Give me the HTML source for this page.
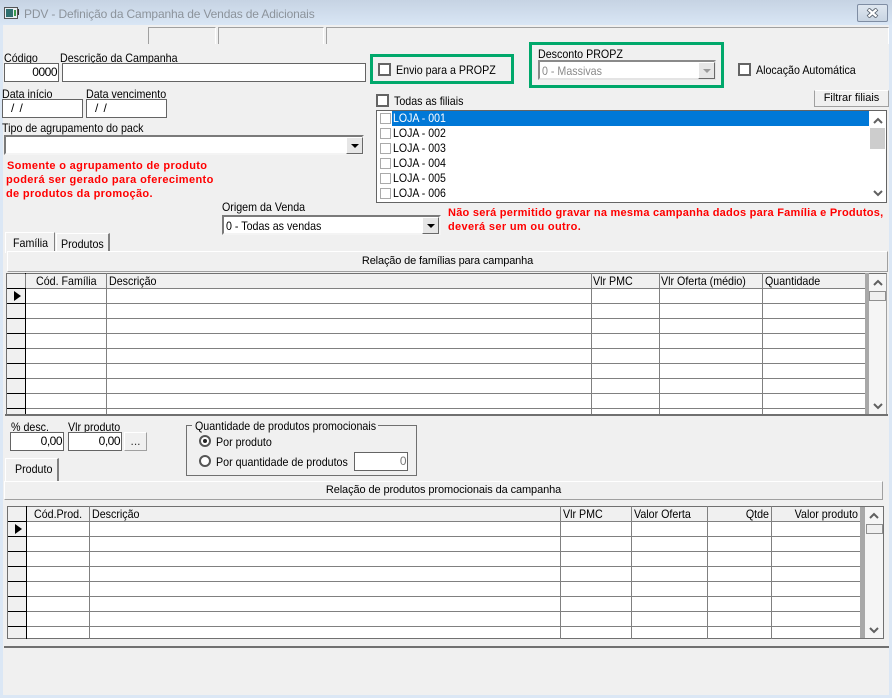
<!DOCTYPE html>
<html><head><meta charset="utf-8"><style>
html,body{margin:0;padding:0}
body{width:892px;height:698px;position:relative;overflow:hidden;background:#f0f0f0;font:12px/14px "Liberation Sans",sans-serif;color:#000}
div,span.a{position:absolute;box-sizing:border-box}
.t{white-space:nowrap;height:14px;transform:scaleX(.89);transform-origin:0 0}
.r{color:#ff0000;font-weight:bold;font-size:11px;letter-spacing:.34px;white-space:nowrap}
.in{background:#fff;border:1px solid #646464;text-align:right;white-space:nowrap;padding-right:1px;letter-spacing:-.5px}
.cb{width:13px;height:13px;background:#fff;border:2px solid #646464}
.ck{width:11px;height:11px;background:#fff;border:1px solid #aaa;left:380px}
.l{left:393px;white-space:nowrap;height:14px;transform:scaleX(.88);transform-origin:0 0}
.h{background:#808080}
.k{background:#000}
.btn{background:#f0f0f0;border:1px solid;border-color:#fff #a0a0a0 #a0a0a0 #fff;text-align:center}
.dd{background:#e6e6e6;border:1px solid;border-color:#fff #696969 #696969 #fff}
.dd i{position:absolute;left:4px;top:6px;width:0;height:0;border:4px solid transparent;border-top:4px solid #000;border-bottom:0}
.v{width:1px;background:#808080}
.rad{width:12px;height:12px;border:2px solid #555;border-radius:50%;background:#fff}
</style></head><body>
<div style="left:0;top:0;width:892px;height:25px;background:linear-gradient(#c6d3e3,#d9e6f5)"></div>
<div style="left:0;top:25px;width:3px;height:673px;background:#dbe7f5"></div>
<div style="right:0;top:25px;width:3px;height:673px;background:#dbe7f5"></div>
<div style="left:0;bottom:0;width:892px;height:3px;background:#dbe7f5"></div>
<div style="left:3px;top:25px;width:886px;height:670px;background:#f0f0f0"></div>
<svg style="position:absolute;left:4px;top:7px" width="16" height="13"><rect x=".5" y=".5" width="13" height="11" fill="#e8eef2" stroke="#555"/><rect x="2" y="2" width="7" height="8" fill="#2f6f6f"/><rect x="10" y="3" width="2" height="6" fill="#3a9a4a"/><rect x="14" y="2" width="1" height="6" fill="#333"/></svg>
<div class="t" style="left:24px;top:7px;color:#8c939b;font-size:12px;letter-spacing:-.15px;transform:none">PDV - Definição da Campanha de Vendas de Adicionais</div>
<div style="left:857px;top:4px;width:31px;height:18px;border:1px solid #7f8da3;border-radius:2px;background:linear-gradient(#dfe7f0,#c8d4e2)"></div>
<svg style="position:absolute;left:866px;top:8px" width="13" height="10"><path d="M2 1 L11 9 M11 1 L2 9" stroke="#5a6470" stroke-width="4"/><path d="M2.5 1.5 L10.5 8.5 M10.5 1.5 L2.5 8.5" stroke="#fff" stroke-width="2.2"/></svg>

<div style="left:148px;top:27px;width:68px;height:17px;border-top:1px solid #a0a0a0;border-left:1px solid #a0a0a0;border-right:1px solid #fff"></div>
<div style="left:218px;top:27px;width:106px;height:17px;border-top:1px solid #a0a0a0;border-left:1px solid #a0a0a0;border-right:1px solid #fff"></div>
<div style="left:326px;top:27px;width:563px;height:17px;border-top:1px solid #a0a0a0;border-left:1px solid #a0a0a0;border-right:1px solid #fff"></div>

<div class="t" style="left:4px;top:51px">Código</div>
<div class="in" style="left:4px;top:63px;width:55px;height:19px;line-height:17px">0000</div>
<div class="t" style="left:60px;top:51px">Descrição da Campanha</div>
<div class="in" style="left:62px;top:63px;width:304px;height:19px"></div>
<div class="t" style="left:2px;top:87px">Data início</div>
<div class="in" style="left:2px;top:99px;width:81px;height:19px;text-align:left;padding-left:8px;line-height:17px">/ &nbsp;/</div>
<div class="t" style="left:86px;top:87px">Data vencimento</div>
<div class="in" style="left:86px;top:99px;width:81px;height:19px;text-align:left;padding-left:8px;line-height:17px">/ &nbsp;/</div>
<div class="t" style="left:2px;top:121px">Tipo de agrupamento do pack</div>
<div style="left:4px;top:135px;width:360px;height:20px;background:#fff;border:2px solid #7a7a7a;border-right-color:#f4f4f4;border-bottom-color:#f4f4f4"></div>
<div class="dd" style="left:346px;top:137px;width:17px;height:17px"><i></i></div>

<div class="r" style="left:7px;top:159px">Somente o agrupamento de produto</div>
<div class="r" style="left:6px;top:173px;letter-spacing:.38px">poderá ser gerado para oferecimento</div>
<div class="r" style="left:6px;top:187px">de produtos da promoção.</div>

<div style="left:370px;top:54px;width:144px;height:30px;border:3px solid #00a86b"></div>
<div class="cb" style="left:378px;top:63px"></div>
<div class="t" style="left:396px;top:63px">Envio para a PROPZ</div>
<div style="left:529px;top:42px;width:195px;height:46px;border:3px solid #00a86b"></div>
<div class="t" style="left:538px;top:47px">Desconto PROPZ</div>
<div style="left:538px;top:60px;width:178px;height:20px;background:#fff;border:2px solid #8a8a8a;border-right-color:#e4e4e4;border-bottom-color:#e4e4e4"></div>
<div class="t" style="left:542px;top:64px;color:#8a8a8a">0 - Massivas</div>
<div class="dd" style="left:698px;top:62px;width:17px;height:17px"><i style="border-top-color:#9a9a9a"></i></div>
<div class="cb" style="left:738px;top:63px"></div>
<div class="t" style="left:756px;top:63px">Alocação Automática</div>

<div class="cb" style="left:376px;top:94px"></div>
<div class="t" style="left:394px;top:94px">Todas as filiais</div>
<div class="btn" style="left:814px;top:90px;width:75px;height:17px;line-height:15px;font-size:11px;border-color:#fff #a0a0a0 #a0a0a0 #a0a0a0">Filtrar filiais</div>

<div style="left:376px;top:110px;width:511px;height:93px;background:#fff;border:1px solid #646464"></div>
<div style="left:392px;top:111px;width:477px;height:15px;background:#0078d7"></div>
<div class="ck" style="top:113px"></div><div class="l" style="top:111px;color:#fff">LOJA - 001</div>
<div class="ck" style="top:128px"></div><div class="l" style="top:126px">LOJA - 002</div>
<div class="ck" style="top:143px"></div><div class="l" style="top:141px">LOJA - 003</div>
<div class="ck" style="top:158px"></div><div class="l" style="top:156px">LOJA - 004</div>
<div class="ck" style="top:173px"></div><div class="l" style="top:171px">LOJA - 005</div>
<div class="ck" style="top:188px"></div><div class="l" style="top:186px">LOJA - 006</div>
<div style="left:870px;top:128px;width:15px;height:21px;background:#cdcdcd"></div>
<svg style="position:absolute;left:873px;top:117px" width="10" height="8"><path d="M1 6 L5 2 L9 6" fill="none" stroke="#606060" stroke-width="2"/></svg>
<svg style="position:absolute;left:873px;top:189px" width="10" height="8"><path d="M1 2 L5 6 L9 2" fill="none" stroke="#606060" stroke-width="2"/></svg>

<div class="r" style="left:448px;top:206px;letter-spacing:.25px">Não será permitido gravar na mesma campanha dados para Família e Produtos,</div>
<div class="r" style="left:448px;top:220px">deverá ser um ou outro.</div>

<div class="t" style="left:222px;top:200px">Origem da Venda</div>
<div style="left:222px;top:215px;width:219px;height:20px;background:#fff;border:2px solid #7a7a7a;border-right-color:#f4f4f4;border-bottom-color:#f4f4f4"></div>
<div class="t" style="left:226px;top:219px">0 - Todas as vendas</div>
<div class="dd" style="left:422px;top:217px;width:17px;height:17px"><i></i></div>

<div style="left:5px;top:232px;width:50px;height:21px;background:#f0f0f0;border:1px solid #fff;border-right:1px solid #808080;border-bottom:0"></div>
<div class="t" style="left:13px;top:236px">Família</div>
<div style="left:56px;top:233px;width:54px;height:19px;border:1px solid #fff;border-right:2px solid #808080;border-bottom:0"></div>
<div class="t" style="left:61px;top:237px">Produtos</div>

<div style="left:7px;top:251px;width:881px;height:21px;border:1px solid;border-color:#fff #a0a0a0 #a0a0a0 #fff;background:#f0f0f0;text-align:center;line-height:19px;font-size:11px;letter-spacing:-.15px">Relação de famílias para campanha</div>

<!-- Grid 1 -->
<div style="left:6px;top:273px;width:881px;height:142px;background:#fff;border-top:1px solid #707070;border-left:1px solid #707070;border-right:1px solid #a0a0a0"></div>
<div style="left:7px;top:274px;width:858px;height:14px;background:#f0f0f0"></div>
<div style="left:7px;top:288px;width:18px;height:127px;background:#f0f0f0"></div>
<div style="left:7px;top:288px;width:858px;height:127px;background:repeating-linear-gradient(#808080 0,#808080 1px,transparent 1px,transparent 15px)"></div>
<div style="left:7px;top:288px;width:18px;height:127px;background:repeating-linear-gradient(#000 0,#000 1px,transparent 1px,transparent 15px)"></div>
<div class="k" style="left:25px;top:273px;width:1px;height:142px;background:#000"></div>
<div style="left:25px;top:274px;width:1px;height:14px;background:#808080"></div>
<div class="v" style="left:106px;top:273px;height:142px"></div>
<div class="v" style="left:591px;top:273px;height:142px"></div>
<div class="v" style="left:659px;top:273px;height:142px"></div>
<div class="v" style="left:762px;top:273px;height:142px"></div>
<div style="left:865px;top:273px;width:4px;height:142px;background:#a8a8a8"></div>
<div style="left:869px;top:274px;width:17px;height:141px;background:#f5f5f5"></div>
<div style="left:869px;top:291px;width:17px;height:10px;background:#f0f0f0;border:1px solid #909090"></div>
<svg style="position:absolute;left:873px;top:279px" width="10" height="8"><path d="M1 6 L5 2 L9 6" fill="none" stroke="#606060" stroke-width="2"/></svg>
<svg style="position:absolute;left:873px;top:402px" width="10" height="8"><path d="M1 2 L5 6 L9 2" fill="none" stroke="#606060" stroke-width="2"/></svg>
<svg style="position:absolute;left:13px;top:290px" width="9" height="12"><path d="M1 1 L8 6 L1 11 Z" fill="#000"/></svg>
<div class="t" style="left:36px;top:274px">Cód. Família</div>
<div class="t" style="left:109px;top:274px">Descrição</div>
<div class="t" style="left:593px;top:274px">Vlr PMC</div>
<div class="t" style="left:661px;top:274px">Vlr Oferta (médio)</div>
<div class="t" style="left:765px;top:274px">Quantidade</div>
<div style="left:5px;top:414px;width:883px;height:2px;background:#707070"></div>

<div class="t" style="left:11px;top:420px">% desc.</div>
<div class="in" style="left:10px;top:432px;width:54px;height:19px;line-height:17px">0,00</div>
<div class="t" style="left:68px;top:420px">Vlr produto</div>
<div class="in" style="left:68px;top:432px;width:54px;height:19px;line-height:17px">0,00</div>
<div class="btn" style="left:124px;top:432px;width:23px;height:19px;line-height:17px;color:#333">...</div>

<div style="left:186px;top:425px;width:231px;height:51px;border:1px solid #707070"></div>
<div style="left:192px;top:419px;width:186px;height:14px;background:#f0f0f0"></div>
<div class="t" style="left:195px;top:419px">Quantidade de produtos promocionais</div>
<div class="rad" style="left:199px;top:435px"></div>
<div style="left:203px;top:439px;width:4px;height:4px;border-radius:50%;background:#222"></div>
<div class="t" style="left:216px;top:435px">Por produto</div>
<div class="rad" style="left:199px;top:455px"></div>
<div class="t" style="left:216px;top:455px">Por quantidade de produtos</div>
<div class="in" style="left:354px;top:452px;width:54px;height:19px;line-height:17px;color:#777">0</div>

<div style="left:5px;top:458px;width:54px;height:23px;border:1px solid #fff;border-right:2px solid #808080;border-bottom:0"></div>
<div class="t" style="left:15px;top:462px">Produto</div>

<div style="left:4px;top:481px;width:879px;height:19px;border:1px solid;border-color:#fff #a0a0a0 #a0a0a0 #fff;background:#f0f0f0;text-align:center;line-height:17px;font-size:11px;letter-spacing:-.1px">Relação de produtos promocionais da campanha</div>

<!-- Grid 2 -->
<div style="left:7px;top:506px;width:877px;height:133px;background:#fff;border:1px solid #707070"></div>
<div style="left:8px;top:507px;width:852px;height:14px;background:#f0f0f0"></div>
<div style="left:8px;top:521px;width:18px;height:117px;background:#f0f0f0"></div>
<div style="left:8px;top:521px;width:852px;height:117px;background:repeating-linear-gradient(#808080 0,#808080 1px,transparent 1px,transparent 15px)"></div>
<div style="left:8px;top:521px;width:18px;height:117px;background:repeating-linear-gradient(#000 0,#000 1px,transparent 1px,transparent 15px)"></div>
<div style="left:26px;top:506px;width:1px;height:133px;background:#000"></div>
<div class="v" style="left:89px;top:506px;height:133px"></div>
<div class="v" style="left:560px;top:506px;height:133px"></div>
<div class="v" style="left:631px;top:506px;height:133px"></div>
<div class="v" style="left:707px;top:506px;height:133px"></div>
<div class="v" style="left:771px;top:506px;height:133px"></div>
<div style="left:860px;top:507px;width:5px;height:131px;background:#a8a8a8"></div>
<div style="left:865px;top:507px;width:18px;height:131px;background:#f5f5f5"></div>
<div style="left:866px;top:524px;width:17px;height:10px;background:#f0f0f0;border:1px solid #909090"></div>
<svg style="position:absolute;left:869px;top:512px" width="10" height="8"><path d="M1 6 L5 2 L9 6" fill="none" stroke="#606060" stroke-width="2"/></svg>
<svg style="position:absolute;left:869px;top:626px" width="10" height="8"><path d="M1 2 L5 6 L9 2" fill="none" stroke="#606060" stroke-width="2"/></svg>
<svg style="position:absolute;left:14px;top:523px" width="9" height="12"><path d="M1 1 L8 6 L1 11 Z" fill="#000"/></svg>
<div class="t" style="left:34px;top:507px">Cód.Prod.</div>
<div class="t" style="left:92px;top:507px">Descrição</div>
<div class="t" style="left:563px;top:507px">Vlr PMC</div>
<div class="t" style="left:634px;top:507px">Valor Oferta</div>
<div class="t" style="left:707px;top:507px;width:62px;text-align:right;transform-origin:100% 0">Qtde</div>
<div class="t" style="left:771px;top:507px;width:87px;text-align:right;transform-origin:100% 0">Valor produto</div>
<div style="left:4px;top:646px;width:885px;height:2px;background:#707070"></div>
</body></html>
